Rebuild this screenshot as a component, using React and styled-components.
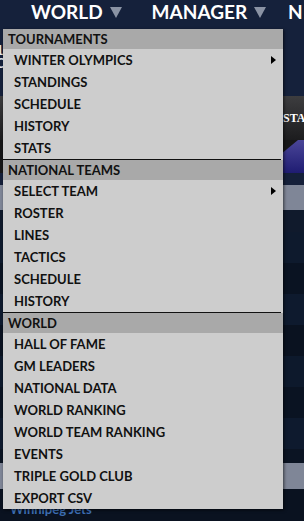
import React from "react";
import styled, { createGlobalStyle } from "styled-components";

const GlobalStyle = createGlobalStyle`
  html, body { margin: 0; padding: 0; }
  body {
    background: #0b1424;
    font-family: Lato, "Open Sans", sans-serif;
    overflow: hidden;
  }
`;

const Page = styled.div`
  position: relative;
  width: 304px;
  height: 521px;
  overflow: hidden;
  display: flex;
  flex-direction: column;
`;

const TopBar = styled.div`
  height: 96px;
  background: #15213b;
  display: flex;
  flex-direction: column;
`;

const Nav = styled.nav`
  display: flex;
  align-items: center;
  height: 22px;
  padding-left: 31px;
  gap: 30px;
  white-space: nowrap;
`;

const NavItem = styled.div`
  display: flex;
  align-items: center;
  gap: 7px;
  color: #ffffff;
  font-weight: 700;
  font-size: 19px;
  margin-left: ${(p) => (p.$tight ? "-8px" : "0")};
`;

const Caret = styled.span`
  width: 0;
  height: 0;
  border-left: 6px solid transparent;
  border-right: 6px solid transparent;
  border-top: 11px solid #8a93a4;
  margin-top: 2px;
`;

const SideText = styled.div`
  margin-top: 22px;
  margin-left: -4px;
  color: #e6e9ef;
  font-size: 13px;
  font-weight: 700;
  line-height: 13px;
`;

const Banner = styled.div`
  height: 44px;
  background: linear-gradient(#3d3d3f, #1c1c1e);
  display: flex;
  align-items: center;
  padding-left: 283px;
  color: #ffffff;
  font-family: "Liberation Serif", serif;
  font-weight: 700;
  font-size: 12px;
  white-space: nowrap;
`;

const TabStrip = styled.div`
  height: 33px;
  background: #161617;
`;

const Tab = styled.div`
  height: 100%;
  margin-left: 282px;
  background: linear-gradient(#4a4698, #1f1c72);
  clip-path: polygon(0 40%, 16px 0, 100% 0, 100% 100%, 0 100%);
`;

const Band = styled.div`
  height: ${(p) => p.$h}px;
  background: ${(p) => p.$bg};
  flex-shrink: 0;
`;

const Footer = styled.div`
  flex: 1;
  background: #0a1220;
  padding: 12px 0 0 10px;
  color: #3d6fb5;
  font-size: 13px;
  font-weight: 700;
`;

const Menu = styled.div`
  position: absolute;
  left: 3px;
  top: 29px;
  width: 280px;
  background: #cdcdcd;
  box-shadow: 1px 1px 3px rgba(0, 0, 0, 0.6);
  display: flex;
  flex-direction: column;
`;

const Header = styled.div`
  height: 20px;
  background: #a9a9a9;
  color: #111;
  font-size: 13px;
  font-weight: 700;
  display: flex;
  align-items: center;
  padding-left: 5px;
`;

const Item = styled.div`
  height: 22px;
  display: flex;
  align-items: center;
  justify-content: space-between;
  padding-left: 11px;
  padding-right: 7px;
  color: #111;
  font-size: 13px;
  font-weight: 700;
`;

const SubArrow = styled.span`
  width: 0;
  height: 0;
  border-top: 4.5px solid transparent;
  border-bottom: 4.5px solid transparent;
  border-left: 5px solid #000;
`;

const Separator = styled.div`
  height: 1px;
  margin-right: 2px;
  background: #111;
`;

const sections = [
  {
    title: "TOURNAMENTS",
    items: [
      ["WINTER OLYMPICS", true],
      ["STANDINGS"],
      ["SCHEDULE"],
      ["HISTORY"],
      ["STATS"],
    ],
  },
  {
    title: "NATIONAL TEAMS",
    items: [
      ["SELECT TEAM", true],
      ["ROSTER"],
      ["LINES"],
      ["TACTICS"],
      ["SCHEDULE"],
      ["HISTORY"],
    ],
  },
  {
    title: "WORLD",
    items: [
      ["HALL OF FAME"],
      ["GM LEADERS"],
      ["NATIONAL DATA"],
      ["WORLD RANKING"],
      ["WORLD TEAM RANKING"],
      ["EVENTS"],
      ["TRIPLE GOLD CLUB"],
      ["EXPORT CSV"],
    ],
  },
];

const rows = [
  ["#101a2c", 22],
  ["#0e1a2d", 31],
  ["#0a1322", 31],
  ["#0e1a2e", 31],
  ["#0a1220", 31],
  ["#0d192c", 31],
  ["#0a1322", 31],
  ["#0e1a2e", 31],
  ["#0b1423", 14],
];

export default function App() {
  return (
    <>
      <GlobalStyle />
      <Page>
        <TopBar>
          <Nav>
            <NavItem>
              WORLD <Caret />
            </NavItem>
            <NavItem>
              MANAGER <Caret />
            </NavItem>
            <NavItem $tight>N</NavItem>
          </Nav>
          <SideText>
            1<br />C
          </SideText>
        </TopBar>
        <Banner>STATS</Banner>
        <TabStrip>
          <Tab />
        </TabStrip>
        <Band $h={12} $bg="#15203a" />
        <Band $h={25} $bg="#7f8697" />
        {rows.map(([bg, h], i) => (
          <Band key={i} $h={h} $bg={bg} />
        ))}
        <Band $h={26} $bg="#7f8697" />
        <Footer>Winnipeg Jets</Footer>
        <Menu>
          {sections.map((s, si) => (
            <React.Fragment key={s.title}>
              {si > 0 && <Separator />}
              <Header>{s.title}</Header>
              {s.items.map(([label, sub]) => (
                <Item key={label}>
                  {label}
                  {sub && <SubArrow />}
                </Item>
              ))}
            </React.Fragment>
          ))}
        </Menu>
      </Page>
    </>
  );
}
